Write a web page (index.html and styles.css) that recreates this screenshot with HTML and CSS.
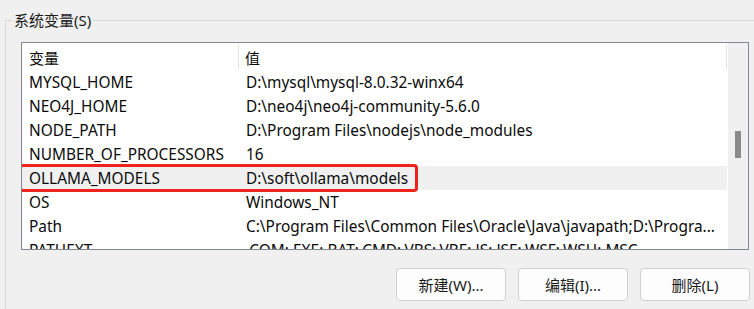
FILE: index.html
```html
<!DOCTYPE html>
<html lang="zh-CN">
<head>
<meta charset="utf-8">
<title>系统变量</title>
<link rel="stylesheet" href="styles.css">
</head>
<body>
<fieldset class="group">
  <legend class="group-title">系统变量(S)</legend>
  <div class="list">
    <div class="list-main">
      <div class="row header">
        <div class="cell name">变量</div>
        <div class="cell value">值</div>
      </div>
      <div class="row"><div class="cell name">MYSQL_HOME</div><div class="cell value">D:\mysql\mysql-8.0.32-winx64</div></div>
      <div class="row"><div class="cell name">NEO4J_HOME</div><div class="cell value">D:\neo4j\neo4j-community-5.6.0</div></div>
      <div class="row"><div class="cell name">NODE_PATH</div><div class="cell value">D:\Program Files\nodejs\node_modules</div></div>
      <div class="row"><div class="cell name">NUMBER_OF_PROCESSORS</div><div class="cell value">16</div></div>
      <div class="row selected"><div class="cell name">OLLAMA_MODELS</div><div class="cell value">D:\soft\ollama\models</div></div>
      <div class="row"><div class="cell name">OS</div><div class="cell value">Windows_NT</div></div>
      <div class="row"><div class="cell name">Path</div><div class="cell value">C:\Program Files\Common Files\Oracle\Java\javapath;D:\Progra...</div></div>
      <div class="row"><div class="cell name">PATHEXT</div><div class="cell value">.COM;.EXE;.BAT;.CMD;.VBS;.VBE;.JS;.JSE;.WSF;.WSH;.MSC</div></div>
    </div>
    <div class="scrollbar"><div class="thumb"></div></div>
    <div class="highlight"></div>
  </div>
  <div class="buttons">
    <button class="btn">新建(W)...</button>
    <button class="btn">编辑(I)...</button>
    <button class="btn">删除(L)</button>
  </div>
</fieldset>
</body>
</html>
```
FILE: styles.css
```css
html, body {
  margin: 0;
  padding: 0;
  background: #f0f0f0;
  width: 754px;
  height: 309px;
  overflow: hidden;
}
body {
  font-family: "Noto Sans", "Noto Sans CJK SC", sans-serif;
  font-size: 15px;
  color: #000;
}
.group {
  margin: 10px 0 0 5px;
  padding: 12px 0 0 6px;
  border: 0;
  border-top: 1px solid #d9d9d9;
  border-left: 1px solid #d9d9d9;
  width: 749px;
  height: 299px;
  box-sizing: border-box;
  min-width: 0;
}
.group-title {
  padding: 0 2px;
  line-height: 20px;
  color: #1a1a1a;
}
.list {
  position: relative;
  margin-left: 9px;
  width: 728px;
  height: 208px;
  box-sizing: border-box;
  border: 1px solid #828790;
  background: #fff;
  display: flex;
  overflow: hidden;
  font-size: 15.4px;
  color: #0a0a0a;
}
.list-main {
  flex: 1;
  display: flex;
  flex-direction: column;
  overflow: hidden;
  border-right: 1px solid #fff;
}
.row {
  display: flex;
  height: 24px;
  align-items: center;
  flex: none;
  white-space: nowrap;
}
.row.header {
  height: 27px;
  align-items: stretch;
  font-size: 15px;
}
.row.header .cell {
  display: flex;
  align-items: center;
}
.row.header .name {
  border-right: 1px solid #e5e5e5;
  margin-top: 1px;
}
.row.header .value {
  border-right: 1px solid #e5e5e5;
  margin-top: 1px;
}
.row.selected {
  background: #f0f0f0;
}
.cell.name {
  width: 217px;
  padding-left: 7px;
  box-sizing: border-box;
  flex: none;
  overflow: hidden;
}
.cell.value {
  flex: 1;
  padding-left: 6px;
  overflow: hidden;
}
.row:not(.header) .cell.name {
  margin-right: 1px;
}
.scrollbar {
  width: 20px;
  flex: none;
  background: #f0f0f0;
  padding-top: 88px;
  box-sizing: border-box;
  display: flex;
  justify-content: center;
}
.thumb {
  width: 6px;
  height: 27px;
  background: #8a8a8a;
}
.highlight {
  position: absolute;
  left: -3px;
  top: 121px;
  width: 399px;
  height: 28px;
  border: 3px solid #f0231c;
  border-radius: 4px;
  box-sizing: border-box;
  pointer-events: none;
}
.buttons {
  display: flex;
  gap: 12px;
  margin-top: 18px;
  margin-left: 384px;
}
.btn {
  width: 110px;
  height: 33px;
  border: 1px solid #d0d0d0;
  border-radius: 4px;
  background: #fdfdfd;
  font-family: "Noto Sans", "Noto Sans CJK SC", sans-serif;
  font-size: 15px;
  color: #1a1a1a;
  padding: 0;
}
```
